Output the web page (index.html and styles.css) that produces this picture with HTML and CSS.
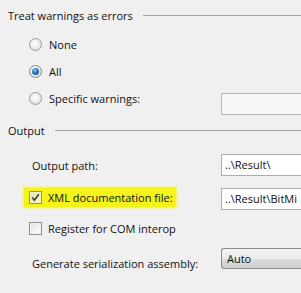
FILE: index.html
```html
<!DOCTYPE html>
<html>
<head>
<meta charset="utf-8">
<link rel="stylesheet" href="styles.css">
</head>
<body>
<div class="panel">
  <div class="group-head head-first"><span class="head-text">Treat warnings as errors</span><span class="rule"></span></div>
  <div class="options">
    <div class="opt"><span class="radio"></span><span>None</span></div>
    <div class="opt"><span class="radio checked"></span><span>All</span></div>
    <div class="opt-row">
      <div class="opt"><span class="radio"></span><span>Specific warnings:</span></div>
      <div class="textbox disabled"></div>
    </div>
  </div>
  <div class="group-head"><span class="head-text">Output</span><span class="rule"></span></div>
  <div class="field-row row-path">
    <span class="label">Output path:</span>
    <div class="textbox">..\Result\</div>
  </div>
  <div class="field-row row-xml">
    <span class="check-wrap highlight"><span class="checkbox checked"><svg viewBox="0 0 13 13" width="13" height="13"><path d="M3.2 6.4 L5.4 9.2 L9.8 3.2" fill="none" stroke="#3a3a2a" stroke-width="1.6"/></svg></span><span>XML documentation file:</span></span>
    <div class="textbox">..\Result\BitMi</div>
  </div>
  <div class="field-row row-com">
    <span class="check-wrap"><span class="checkbox"></span><span>Register for COM interop</span></span>
  </div>
  <div class="field-row row-gen">
    <span class="label label-gen">Generate serialization assembly:</span>
    <div class="dropdown">Auto</div>
  </div>
</div>
</body>
</html>
```

FILE: styles.css
```css
html, body {
  margin: 0;
  padding: 0;
  background: #f0f0f0;
  overflow: hidden;
}
body {
  font-family: "Open Sans", "Noto Sans", sans-serif;
  font-size: 11px;
  color: #111;
  width: 301px;
  height: 293px;
}
.panel {
  width: 301px;
}
.group-head {
  display: flex;
  align-items: center;
  height: 30px;
  padding-left: 8px;
  gap: 10px;
}
.head-first {
  margin-top: 1px;
  height: 28px;
}
.rule {
  flex: 1;
  border-top: 1px solid #a3a3a3;
  margin-top: 1px;
}
.options {
  padding-top: 2px;
}
.opt {
  display: flex;
  align-items: center;
  height: 27px;
  padding-left: 29px;
  gap: 7px;
}
.opt-row {
  display: grid;
  grid-template-columns: 221px 1fr;
  align-items: start;
}
.radio {
  width: 11px;
  height: 11px;
  border-radius: 50%;
  border: 1px solid #9a9a9a;
  background: radial-gradient(circle at 45% 40%, #ffffff 0%, #eaeaea 55%, #cfcfcf 100%);
  display: flex;
  align-items: center;
  justify-content: center;
}
.radio.checked {
  border-color: #7d8a97;
}
.radio.checked::after {
  content: "";
  width: 7px;
  height: 7px;
  border-radius: 50%;
  background: radial-gradient(circle at 40% 35%, #9ad3f5 0%, #2a7ac0 40%, #0c3f74 100%);
}
.textbox {
  height: 20px;
  border: 1px solid #abadb3;
  border-right: none;
  background: #fff;
  line-height: 20px;
  padding-left: 3px;
  white-space: nowrap;
  overflow: hidden;
}
.textbox.disabled {
  margin-top: 8px;
  background: #f6f6f6;
  border-color: #b5b5b5;
}
.field-row {
  display: grid;
  grid-template-columns: 221px 1fr;
  align-items: center;
  height: 22px;
}
.row-path { margin-top: 9px; }
.row-xml { margin-top: 12px; }
.row-com { margin-top: 7px; }
.row-gen {
  margin-top: 9px;
  height: 21px;
  align-items: start;
}
.label {
  padding-left: 32px;
  white-space: nowrap;
}
.label-gen {
  line-height: 16px;
  margin-top: 8px;
}
.check-wrap {
  display: flex;
  align-items: center;
  gap: 6px;
  margin-left: 29px;
  white-space: nowrap;
}
.highlight {
  justify-self: start;
  margin-left: 24px;
  padding: 0 3px 0 5px;
  height: 19px;
  align-self: start;
  background: #f4f41a;
  box-shadow: 0 0 2px 1px #f4f43a;
}
.checkbox {
  width: 11px;
  height: 11px;
  border: 1px solid #8f8f8f;
  background: linear-gradient(135deg, #dcdcdc 0%, #f4f4f4 60%, #ffffff 100%);
  box-shadow: inset 0 0 0 1px #f2f2f2;
  position: relative;
  flex: none;
}
.checkbox.checked {
  background: linear-gradient(135deg, #e4e4b0 0%, #f6f6cc 100%);
  box-shadow: inset 0 0 0 1px #f0f0c0;
}
.checkbox svg {
  position: absolute;
  left: -1px;
  top: -1px;
}
.dropdown {
  height: 19px;
  border: 1px solid #8a8a8a;
  border-right: none;
  border-radius: 3px 0 0 3px;
  background: linear-gradient(#f3f3f3 0%, #ebebeb 50%, #dddddd 51%, #cfcfcf 100%);
  line-height: 19px;
  padding-left: 5px;
}
```
